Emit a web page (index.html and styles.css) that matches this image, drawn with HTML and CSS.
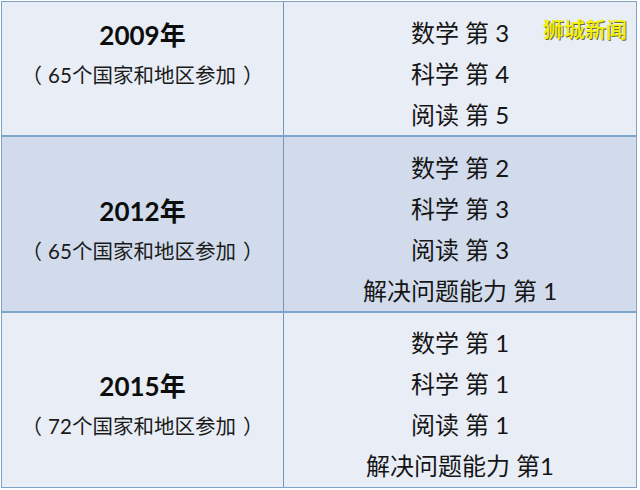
FILE: index.html
```html
<!DOCTYPE html>
<html lang="zh">
<head>
<meta charset="utf-8">
<title>PISA 排名</title>
<link rel="stylesheet" href="styles.css">
</head>
<body>
<div class="page">
  <div class="table">
    <div class="row light">
      <div class="cell left top1">
        <div class="year">2009年</div>
        <div class="note"><span class="po">（</span>65个国家和地区参加<span class="pc">）</span></div>
      </div>
      <div class="cell right pad10">
        <div>数学 第 3</div>
        <div>科学 第 4</div>
        <div>阅读 第 5</div>
      </div>
    </div>
    <div class="row dark">
      <div class="cell left top2">
        <div class="year">2012年</div>
        <div class="note"><span class="po">（</span>65个国家和地区参加<span class="pc">）</span></div>
      </div>
      <div class="cell right pad10">
        <div>数学 第 2</div>
        <div>科学 第 3</div>
        <div>阅读 第 3</div>
        <div>解决问题能力 第 1</div>
      </div>
    </div>
    <div class="row light last">
      <div class="cell left top3">
        <div class="year">2015年</div>
        <div class="note"><span class="po">（</span>72个国家和地区参加<span class="pc">）</span></div>
      </div>
      <div class="cell right pad9">
        <div>数学 第 1</div>
        <div>科学 第 1</div>
        <div>阅读 第 1</div>
        <div>解决问题能力 第1</div>
      </div>
    </div>
  </div>
  <div class="watermark">狮城新闻</div>
</div>
</body>
</html>
```
FILE: styles.css
```css
html, body {
  margin: 0;
  padding: 0;
  background: #ffffff;
}
body {
  font-family: Lato, "Noto Sans CJK SC", sans-serif;
  color: #111111;
}
.page {
  position: relative;
  width: 640px;
  height: 490px;
  overflow: hidden;
}
.table {
  margin: 1px 0 0 1px;
  width: 636px;
  box-sizing: border-box;
  border: 1px solid #7fa3c6;
  display: flex;
  flex-direction: column;
}
.row {
  display: grid;
  grid-template-columns: 282px 1fr;
  height: 176px;
  box-sizing: border-box;
  border-bottom: 2px solid #7ea6cd;
}
.row:first-child {
  height: 135px;
}
.row.last {
  height: 174px;
  border-bottom: none;
}
.light { background: #e9edf5; }
.dark { background: #d1dbeb; }
.cell {
  box-sizing: border-box;
  text-align: center;
}
.left {
  border-right: 1px solid #6f97bd;
}
.top1 { padding-top: 13px; }
.top2 { padding-top: 54px; }
.top3 { padding-top: 53px; }
.year {
  font-size: 26px;
  font-weight: 700;
  line-height: 40px;
  color: #0d0d0d;
}
.note {
  font-size: 20.5px;
  line-height: 40px;
  color: #1a1a1a;
}
.po { margin-right: 6px; }
.pc { margin-left: 7px; }
.right {
  font-size: 24px;
  line-height: 41px;
  color: #151515;
}
.pad10 { padding-top: 10px; }
.pad9 { padding-top: 9px; }
.watermark {
  position: absolute;
  left: 543px;
  top: 15px;
  font-family: "Noto Sans CJK SC", sans-serif;
  font-size: 21px;
  line-height: 26px;
  font-weight: 500;
  color: #f5f000;
  text-shadow: 1px 1px 0 #6b6b30;
}
```
